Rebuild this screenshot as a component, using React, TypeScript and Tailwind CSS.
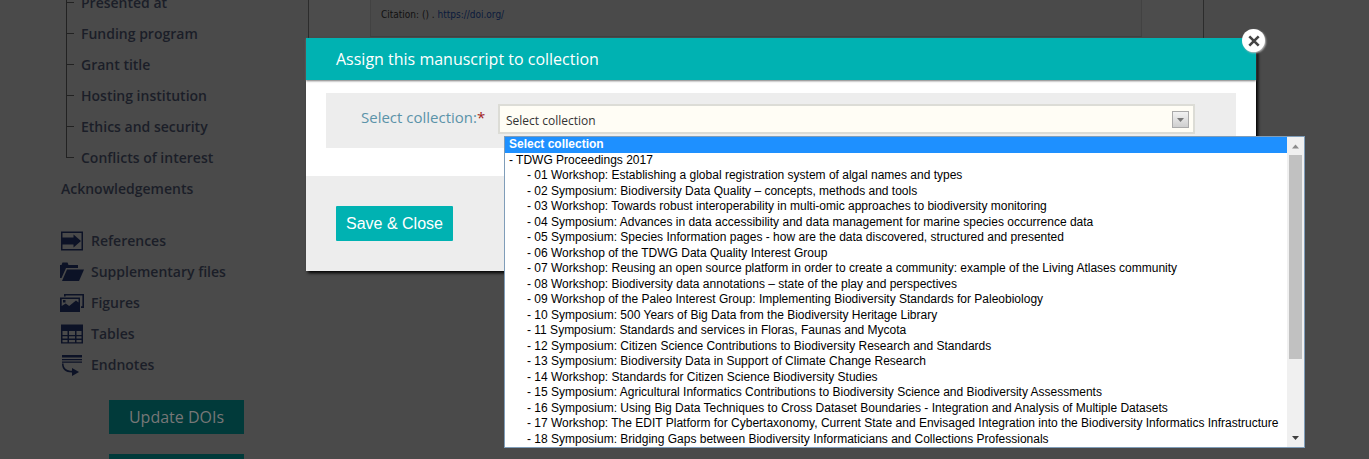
import React from "react";

const sections = [
  "Presented at",
  "Funding program",
  "Grant title",
  "Hosting institution",
  "Ethics and security",
  "Conflicts of interest",
];

const sessions = [
  "- 01 Workshop: Establishing a global registration system of algal names and types",
  "- 02 Symposium: Biodiversity Data Quality – concepts, methods and tools",
  "- 03 Workshop: Towards robust interoperability in multi-omic approaches to biodiversity monitoring",
  "- 04 Symposium: Advances in data accessibility and data management for marine species occurrence data",
  "- 05 Symposium: Species Information pages - how are the data discovered, structured and presented",
  "- 06 Workshop of the TDWG Data Quality Interest Group",
  "- 07 Workshop: Reusing an open source platform in order to create a community: example of the Living Atlases community",
  "- 08 Workshop: Biodiversity data annotations – state of the play and perspectives",
  "- 09 Workshop of the Paleo Interest Group: Implementing Biodiversity Standards for Paleobiology",
  "- 10 Symposium: 500 Years of Big Data from the Biodiversity Heritage Library",
  "- 11 Symposium: Standards and services in Floras, Faunas and Mycota",
  "- 12 Symposium: Citizen Science Contributions to Biodiversity Research and Standards",
  "- 13 Symposium: Biodiversity Data in Support of Climate Change Research",
  "- 14 Workshop: Standards for Citizen Science Biodiversity Studies",
  "- 15 Symposium: Agricultural Informatics Contributions to Biodiversity Science and Biodiversity Assessments",
  "- 16 Symposium: Using Big Data Techniques to Cross Dataset Boundaries - Integration and Analysis of Multiple Datasets",
  "- 17 Workshop: The EDIT Platform for Cybertaxonomy, Current State and Envisaged Integration into the Biodiversity Informatics Infrastructure",
  "- 18 Symposium: Bridging Gaps between Biodiversity Informaticians and Collections Professionals",
];

function Icon({ children }: { children: React.ReactNode }) {
  return (
    <svg viewBox="0 0 24 22" className="h-[22px] w-6 shrink-0 fill-[#0c1226]" aria-hidden="true">
      {children}
    </svg>
  );
}

const resources = [
  {
    label: "References",
    icon: (
      <Icon>
        <path fillRule="evenodd" d="M1 1.500h22v19H1zM2.500 3v16h19V3z" />
        <path d="M2 7.500h11.500V4.500l7.500 6.500-7.500 6.500v-3H2z" />
      </Icon>
    ),
  },
  {
    label: "Supplementary files",
    icon: (
      <Icon>
        <path d="M0 17V4h1.500l1-2.500h5L8.500 4H18v3H6L1.500 17z" />
        <path d="M7 8.500h17L19 20H2z" />
      </Icon>
    ),
  },
  {
    label: "Figures",
    icon: (
      <Icon>
        <path d="M4 4.500V2h20v14h-3v-1.700h1.400V3.600H5.600v.9z" />
        <path fillRule="evenodd" d="M0 5.500h20V20H0zM1.700 7v7l4-2.500 3.500 2.500L16 8.500l2.500 2V7zM3 8h2.500v2.500H3z" />
      </Icon>
    ),
  },
  {
    label: "Tables",
    icon: (
      <Icon>
        <path
          fillRule="evenodd"
          d="M1 1.500h22v19H1zM2.500 8v4h5V8zM9 8v4h6V8zM16.500 8v4h5V8zM2.500 13.300v2.200h5v-2.200zM9 13.300v2.200h6v-2.200zM16.500 13.300v2.200h5v-2.200zM2.500 17v2.200h5V17zM9 17v2.200h6V17zM16.500 17v2.200h5V17z"
        />
      </Icon>
    ),
  },
  {
    label: "Endnotes",
    icon: (
      <Icon>
        <path d="M2 1h20v2.500H2zM2 5h20v1.300H2zM2 7.500h20v1.300H2z" />
        <path d="M2 9.500h1.500c0 5 3.500 7.300 8.500 7.300V14l7 4-7 4v-3.500C5.500 18.500 2 15.500 2 9.500z" />
      </Icon>
    ),
  },
];

function Sidebar() {
  return (
    <aside className="flex w-[306px] shrink-0 flex-col pl-[60px] text-sm font-semibold text-[#1b1e28]">
      <ul className="-mt-[13px] shrink-0">
        {sections.map((s, i) => (
          <li key={s} className="flex h-[31px] items-stretch pl-1.5">
            <span className="flex w-[15px] flex-col" aria-hidden="true">
              <span className="h-1/2 w-2 border-b border-l border-[#222]" />
              <span className={i < sections.length - 1 ? "h-1/2 border-l border-[#222]" : "h-1/2"} />
            </span>
            <a href="#section" className="self-center">{s}</a>
          </li>
        ))}
      </ul>
      <a href="#acknowledgements" className="flex h-8 shrink-0 items-center pl-px">Acknowledgements</a>
      <ul className="mt-5 shrink-0">
        {resources.map((r) => (
          <li key={r.label}>
            <a href="#resource" className="flex h-[31px] items-center gap-[7px]">
              {r.icon}
              {r.label}
            </a>
          </li>
        ))}
      </ul>
      <div className="mt-5 ml-[49px] flex w-[135px] shrink-0 flex-col gap-5 text-base font-normal text-[#777]">
        <button className="h-[34px] bg-[#013a3a]">Update DOIs</button>
        <button className="h-[34px] bg-[#013a3a]" aria-label="More" />
      </div>
    </aside>
  );
}

function CollectionList() {
  return (
    <div className="absolute top-8 left-1.5 z-10 flex h-[312px] w-[801px] border border-[#7f9db9] bg-white font-['Liberation_Sans',Arial,sans-serif] text-xs text-black">
      <ul role="listbox" aria-label="Collections" className="grid flex-1 grid-rows-[repeat(20,minmax(0,1fr))] leading-[14px] whitespace-nowrap">
        <li role="option" aria-selected="true" className="bg-[#1e90ff] pl-1 font-bold text-white">Select collection</li>
        <li role="option" aria-selected="false" className="pl-1">- TDWG Proceedings 2017</li>
        {sessions.map((s) => (
          <li key={s} role="option" aria-selected="false" className="pl-[22px]">{s}</li>
        ))}
      </ul>
      <div className="flex w-[17px] shrink-0 flex-col items-center bg-[#f0f0f0]" aria-hidden="true">
        <svg viewBox="0 0 17 18" className="h-[18px] w-[17px] fill-[#8c8c8c]"><path d="M5 11.500 8.500 7.500l3.500 4z" /></svg>
        <div className="h-[204px] w-[13px] bg-[#c1c1c1]" />
        <div className="flex-1" />
        <svg viewBox="0 0 17 18" className="h-[18px] w-[17px] fill-[#404040]"><path d="M5 7h7l-3.500 4z" /></svg>
      </div>
    </div>
  );
}

export default function App() {
  return (
    <div className="relative flex h-screen overflow-hidden bg-[#4a4a4a] font-['Open_Sans','Noto_Sans',sans-serif]">
      <Sidebar />
      <main className="mr-[165px] ml-0.5 flex-1 self-start border-x border-[#2c2c2c] bg-[#4c4c4c] px-[61px] pb-20">
        <section className="flex h-[37px] items-start border-x border-b border-[#424242] bg-[#4a4a4a] pt-2 pl-2.5 font-['DejaVu_Sans_Condensed','DejaVu_Sans',sans-serif] text-[10px] leading-[14px] text-[#111]">
          <p>
            Citation: () . <a href="#doi" className="text-[#0a1a3c]">https://doi.org/</a>
          </p>
        </section>
      </main>

      <div className="absolute inset-0 flex items-start pt-[38px] pr-[113px] pl-[306px]">
        <div role="dialog" aria-labelledby="dialog-title" className="relative flex-1 bg-white shadow-[2px_2px_3px_0px_#000]">
          <header className="flex h-[42px] items-center bg-[#00b2b2] px-[30px] text-base text-white shadow-[0_1px_2px_#777]">
            <h2 id="dialog-title">Assign this manuscript to collection</h2>
          </header>
          <button aria-label="Close" className="absolute -top-[9px] -right-[9px] flex h-[23px] w-[23px] items-center justify-center rounded-full bg-white shadow-[1px_1px_2px_#bbb]">
            <svg viewBox="0 0 12 12" className="h-3 w-3 fill-none stroke-[#444] stroke-[2.6]"><path d="m1.300 1.300 9.400 9.400m0-9.400-9.400 9.400" /></svg>
          </button>
          <div className="px-5 pt-[13px] pb-7">
            <div className="flex h-[55px] items-start bg-[#ededed] pr-[41px] pl-[35px]">
              <label htmlFor="collection" className="w-[137px] shrink-0 pt-3 text-[15px] leading-6 whitespace-nowrap text-[#5b93a9]">
                Select collection:<span className="text-[#a02020]">*</span>
              </label>
              <div className="relative mt-[11px] h-[30px] flex-1">
                <select id="collection" className="h-[30px] w-full appearance-none border-2 border-[#dcdcd6] bg-[#fffdf5] px-1.5 pt-1 text-xs text-[#333]">
                  <option>Select collection</option>
                </select>
                <span className="pointer-events-none absolute top-[7px] right-1.5 flex h-[17px] w-[17px] items-center justify-center border border-[#aaa] bg-linear-to-b from-[#f2f2f2] to-[#cfcfcf]">
                  <svg viewBox="0 0 7 4" className="h-1 w-[7px] fill-[#777]"><path d="M0 0h7L3.500 4z" /></svg>
                </span>
                <CollectionList />
              </div>
            </div>
          </div>
          <footer className="h-[95px] bg-[#ededed] px-[30px] pt-[30px]">
            <button className="h-[35px] rounded-[1px] bg-[#00b2b2] px-2.5 font-['Liberation_Sans',Arial,sans-serif] text-base text-white">Save &amp; Close</button>
          </footer>
        </div>
      </div>
    </div>
  );
}
